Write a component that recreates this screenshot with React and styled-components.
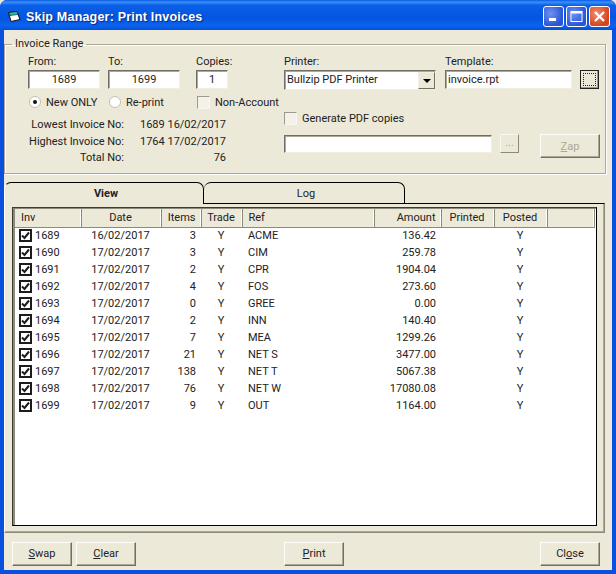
import React from "react";
import styled, {createGlobalStyle} from "styled-components";

const Global = createGlobalStyle`
    html, body {
        margin: 0;
        padding: 0;
        background: #ece9d8;
    }
    * {
        box-sizing: border-box;
    }
`;

const Win = styled.div`
    width: 616px;
    height: 574px;
    display: flex;
    flex-direction: column;
    overflow: hidden;
    border-radius: 7px 7px 0 0;
    background: #0a4fe0;
    font-family: Roboto, "Liberation Sans", Arial, sans-serif;
    font-size: 11px;
    color: #222;
`;

const TitleBar = styled.div`
    height: 30px;
    flex: none;
    display: flex;
    align-items: center;
    gap: 5px;
    padding: 3px 6px 0 8px;
    background: linear-gradient(180deg, #0a5be4 0%, #3b8ffa 7%, #0a5fe8 18%, #0455e0 60%, #0a63ee 85%, #0350d8 100%);
`;

const TitleText = styled.div`
    flex: 1;
    color: #fff;
    font-family: "Liberation Sans", Arial, sans-serif;
    font-weight: bold;
    font-size: 12.5px;
    letter-spacing: 0.2px;
    text-shadow: 1px 1px 1px #0a2a80;
`;

const CaptionGroup = styled.div`
    display: flex;
    gap: 2px;
`;

const CaptionBtn = styled.div`
    width: 21px;
    height: 21px;
    border: 1px solid #fff;
    border-radius: 3px;
    display: flex;
    align-items: center;
    justify-content: center;
    background: ${props => props.$close
        ? "radial-gradient(circle at 35% 35%, #f09070, #d8431c 70%)"
        : "radial-gradient(circle at 35% 35%, #6d93f2, #2b55d8 70%)"};
`;

const Body = styled.div`
    flex: 1;
    margin: 0 4px 4px 4px;
    background: #ece9d8;
    display: flex;
    flex-direction: column;
    min-height: 0;
`;

const Group = styled.fieldset`
    margin: 7px 0 0 0;
    padding: 0 0 0 23px;
    height: 137px;
    border: 1px solid #aca899;
    box-shadow: inset 1px 1px 0 #fff, 1px 1px 0 #fff;
    display: flex;
    gap: 6px;
    width: 602px;
`;

const Legend = styled.legend`
    margin-left: -16px;
    padding: 0 3px;
    line-height: 14px;
`;

const LeftCol = styled.div`
    width: 250px;
    flex: none;
    display: flex;
    flex-direction: column;
`;

const RightCol = styled.div`
    flex: 1;
    display: flex;
    flex-direction: column;
`;

const FieldRow = styled.div`
    display: flex;
    gap: 8px;
    margin-top: 4px;
`;

const Field = styled.div`
    width: ${props => props.$w}px;
    margin-right: ${props => props.$mr || 0}px;
    display: flex;
    flex-direction: column;
`;

const Label = styled.div`
    height: 14px;
    line-height: 14px;
    white-space: nowrap;
    margin-bottom: 1px;
`;

const Input = styled.div`
    height: 19px;
    width: ${props => props.$w ? props.$w + "px" : "100%"};
    background: #fff;
    border: 1px solid;
    border-color: #716f64 #f1efe2 #f1efe2 #716f64;
    box-shadow: inset 1px 1px 0 #aca899;
    padding: 0 2px;
    line-height: 17px;
    text-align: ${props => props.$center ? "center" : "left"};
    white-space: nowrap;
    overflow: hidden;
`;

const Combo = styled(Input)`
    position: relative;
    height: 20px;
`;

const ComboArrow = styled.div`
    position: absolute;
    right: 0;
    top: 1px;
    width: 17px;
    height: 17px;
    background: #ece9d8;
    border: 1px solid;
    border-color: #f1efe2 #716f64 #716f64 #f1efe2;
    display: flex;
    align-items: center;
    justify-content: center;
    &::after {
        content: "";
        border-left: 4px solid transparent;
        border-right: 4px solid transparent;
        border-top: 4px solid #000;
    }
`;

const OptionRow = styled.div`
    display: flex;
    align-items: center;
    height: 16px;
    margin-top: 5px;
    margin-left: 1px;
`;

const Option = styled.div`
    display: flex;
    align-items: center;
    gap: 5px;
    width: ${props => props.$w}px;
    white-space: nowrap;
`;

const Radio = styled.div`
    width: 12px;
    height: 12px;
    border-radius: 50%;
    background: #fff;
    border: 1px solid #c4c1b0;
    display: flex;
    align-items: center;
    justify-content: center;
    &::after {
        content: "";
        width: 4px;
        height: 4px;
        border-radius: 50%;
        background: ${props => props.$on ? "#111" : "transparent"};
    }
`;

const Check = styled.div`
    width: 13px;
    height: 13px;
    flex: none;
    background: #f4f2e8;
    border: 1px solid;
    border-color: #9c9a8c #f8f7f0 #f8f7f0 #9c9a8c;
`;

const InfoGrid = styled.div`
    display: grid;
    grid-template-columns: 96px 93px;
    column-gap: 9px;
    margin-top: 7px;
    text-align: right;
    line-height: 16.5px;
    white-space: nowrap;
`;

const DotsBtn = styled.div`
    width: 19px;
    height: 19px;
    margin-top: 15px;
    background: #ece9d8;
    border: 1px solid #222;
    box-shadow: inset -1px -1px 0 #999;
    display: flex;
    align-items: center;
    justify-content: center;
    &::after {
        content: "";
        width: 11px;
        height: 11px;
        border: 1px dotted #222;
    }
`;

const PdfCheck = styled.div`
    display: flex;
    align-items: center;
    gap: 5px;
    margin-top: 20px;
    height: 16px;
`;

const PathRow = styled.div`
    display: flex;
    align-items: flex-start;
    margin-top: 9px;
`;

const PathInput = styled(Input)`
    height: 18px;
`;

const SmallBtn = styled.div`
    width: 19px;
    height: 19px;
    margin: -1px 0 0 8px;
    text-align: center;
    line-height: 15px;
    color: #aca899;
    background: #ece9d8;
    border: 1px solid;
    border-color: #f8f7f0 #8c8a7c #8c8a7c #f8f7f0;
`;

const Btn = styled.div`
    width: 60px;
    height: 24px;
    flex: none;
    display: flex;
    align-items: center;
    justify-content: center;
    background: #ece9d8;
    border: 1px solid;
    border-color: #fdfdf8 #716f64 #716f64 #fdfdf8;
    box-shadow: inset -1px -1px 0 #aca899;
    color: ${props => props.$off ? "#aca899" : "#222"};
    margin-left: ${props => props.$ml || 0}px;
    margin-top: ${props => props.$mt || 0}px;
    u {
        text-underline-offset: 1px;
    }
`;

const Tabs = styled.div`
    display: flex;
    margin-top: 6px;
    height: 23px;
    flex: none;
    align-items: flex-end;
`;

const Tab = styled.div`
    width: ${props => props.$w}px;
    height: ${props => props.$active ? 22 : 21}px;
    display: flex;
    align-items: center;
    justify-content: center;
    padding-left: 4px;
    border-top: 1px solid #000;
    border-right: 1px solid #000;
    border-left: ${props => props.$active ? "1px solid #fff" : "none"};
    border-radius: 7px 7px 0 0;
    font-weight: ${props => props.$active ? "bold" : "normal"};
    position: relative;
    z-index: ${props => props.$active ? 1 : 0};
    margin-bottom: ${props => props.$active ? "-1px" : 0};
    background: #ece9d8;
`;

const TabPanel = styled.div`
    height: 330px;
    width: 601px;
    flex: none;
    padding: 3px 7px 6px 7px;
    border: 1px solid #8c8a7c;
    border-top: 1px solid #000;
    border-left-color: #fff;
    box-shadow: inset -1px -1px 0 #aca899;
`;

const ListBox = styled.div`
    height: 100%;
    background: #fff;
    border: 1px solid #000;
    border-top-color: #3c3c34;
    border-left-color: #3c3c34;
    box-shadow: inset 2px 1px 0 #8c8a7c;
    padding: 1px 0 0 2px;
    overflow: hidden;
`;

const Table = styled.table`
    border-collapse: collapse;
    table-layout: fixed;
    width: 579px;
`;

const Th = styled.th`
    height: 18px;
    padding: 0 5px 0 ${props => props.$pl || 4}px;
    font-weight: normal;
    background: #ece9d8;
    text-align: ${props => props.$align || "left"};
    border-right: 1px solid #8c8a7c;
    border-bottom: 1px solid #8c8a7c;
    box-shadow: inset -1px 0 0 #fff;
    white-space: nowrap;
`;

const Td = styled.td`
    height: 17px;
    padding: 0 5px 0 ${props => props.$pl || 4}px;
    text-align: ${props => props.$align || "left"};
    white-space: nowrap;
`;

const InvCell = styled.div`
    display: flex;
    align-items: center;
    gap: 3px;
`;

const RowCheck = styled.div`
    width: 13px;
    height: 13px;
    border: 2px solid #1c1c1c;
    background: #fff;
    display: flex;
    align-items: center;
    justify-content: center;
`;

const Footer = styled.div`
    flex: 1;
    display: flex;
    align-items: center;
    padding: 4px 0 0 8px;
`;

const columns = [
    {title: "Inv", width: 66, pl: 6},
    {title: "Date", width: 80, align: "center"},
    {title: "Items", width: 40, align: "right"},
    {title: "Trade", width: 41, align: "center"},
    {title: "Ref", width: 132, pl: 6},
    {title: "Amount", width: 67, align: "right"},
    {title: "Printed", width: 53, align: "center"},
    {title: "Posted", width: 53, align: "center"},
    {title: "", width: 47}
];

const invoices = [
    ["1689", "16/02/2017", "3", "ACME", "136.42"],
    ["1690", "17/02/2017", "3", "CIM", "259.78"],
    ["1691", "17/02/2017", "2", "CPR", "1904.04"],
    ["1692", "17/02/2017", "4", "FOS", "273.60"],
    ["1693", "17/02/2017", "0", "GREE", "0.00"],
    ["1694", "17/02/2017", "2", "INN", "140.40"],
    ["1695", "17/02/2017", "7", "MEA", "1299.26"],
    ["1696", "17/02/2017", "21", "NET S", "3477.00"],
    ["1697", "17/02/2017", "138", "NET T", "5067.38"],
    ["1698", "17/02/2017", "76", "NET W", "17080.08"],
    ["1699", "17/02/2017", "9", "OUT", "1164.00"]
];

const TickIcon = () => (
    <svg width="9" height="9" viewBox="0 0 9 9">
        <path d="M1 4.5 L3.5 7 L8 1.5" fill="none" stroke="#1c1c1c" strokeWidth="2"/>
    </svg>
);

const AppIcon = () => (
    <svg width="13" height="12" viewBox="0 0 13 12">
        <path d="M0.5 1.5 L9 0.5 L12 8.5 L3 10.5 Z" fill="#fff" stroke="#111"/>
        <path d="M1 1.5 L9 0.5 L10 3.5 L2 4.5 Z" fill="#27c0b0" stroke="#111" strokeWidth="0.6"/>
    </svg>
);

export default function App() {
    return (
        <Win>
            <Global/>
            <TitleBar>
                <AppIcon/>
                <TitleText>Skip Manager: Print Invoices</TitleText>
                <CaptionGroup>
                    <CaptionBtn>
                        <svg width="13" height="13" viewBox="0 0 13 13">
                            <rect x="2" y="8" width="7" height="3" fill="#fff"/>
                        </svg>
                    </CaptionBtn>
                    <CaptionBtn>
                        <svg width="13" height="13" viewBox="0 0 13 13">
                            <rect x="1" y="1.5" width="11" height="10" fill="none" stroke="#fff"/>
                            <rect x="1" y="1" width="11" height="2.5" fill="#fff"/>
                        </svg>
                    </CaptionBtn>
                    <CaptionBtn $close>
                        <svg width="13" height="13" viewBox="0 0 13 13">
                            <path d="M2 2 L11 11 M11 2 L2 11" stroke="#fff" strokeWidth="2.2"/>
                        </svg>
                    </CaptionBtn>
                </CaptionGroup>
            </TitleBar>
            <Body>
                <Group>
                    <Legend>Invoice Range</Legend>
                    <LeftCol>
                        <FieldRow>
                            <Field $w={72}><Label>From:</Label><Input $center>1689</Input></Field>
                            <Field $w={72} $mr={8}><Label>To:</Label><Input $center>1699</Input></Field>
                            <Field $w={32}><Label>Copies:</Label><Input $center>1</Input></Field>
                        </FieldRow>
                        <OptionRow>
                            <Option $w={80}><Radio $on/>New ONLY</Option>
                            <Option $w={88}><Radio/>Re-print</Option>
                            <Option $w={80}><Check/>Non-Account</Option>
                        </OptionRow>
                        <InfoGrid>
                            <span>Lowest Invoice No:</span><span>1689 16/02/2017</span>
                            <span>Highest Invoice No:</span><span>1764 17/02/2017</span>
                            <span>Total No:</span><span>76</span>
                        </InfoGrid>
                    </LeftCol>
                    <RightCol>
                        <FieldRow>
                            <Field $w={152} $mr={1}>
                                <Label>Printer:</Label>
                                <Combo>Bullzip PDF Printer<ComboArrow/></Combo>
                            </Field>
                            <Field $w={127}><Label>Template:</Label><Input>invoice.rpt</Input></Field>
                            <DotsBtn/>
                        </FieldRow>
                        <PdfCheck><Check/>Generate PDF copies</PdfCheck>
                        <PathRow>
                            <PathInput $w={208}/>
                            <SmallBtn>...</SmallBtn>
                            <Btn $off $ml={21} $mt={-1}><u>Z</u>ap</Btn>
                        </PathRow>
                    </RightCol>
                </Group>
                <Tabs>
                    <Tab $w={200} $active>View</Tab>
                    <Tab $w={201}>Log</Tab>
                </Tabs>
                <TabPanel>
                    <ListBox>
                        <Table>
                            <colgroup>
                                {columns.map((col, i) => <col key={i} width={col.width}/>)}
                            </colgroup>
                            <thead>
                                <tr>
                                    {columns.map((col, i) => <Th key={i} $align={col.align} $pl={col.pl}>{col.title}</Th>)}
                                </tr>
                            </thead>
                            <tbody>
                                {invoices.map(row => (
                                    <tr key={row[0]}>
                                        <Td><InvCell><RowCheck><TickIcon/></RowCheck>{row[0]}</InvCell></Td>
                                        <Td $align="center">{row[1]}</Td>
                                        <Td $align="right">{row[2]}</Td>
                                        <Td $align="center">Y</Td>
                                        <Td $pl={6}>{row[3]}</Td>
                                        <Td $align="right">{row[4]}</Td>
                                        <Td/>
                                        <Td $align="center">Y</Td>
                                        <Td/>
                                    </tr>
                                ))}
                            </tbody>
                        </Table>
                    </ListBox>
                </TabPanel>
                <Footer>
                    <Btn><u>S</u>wap</Btn>
                    <Btn $ml={4}><u>C</u>lear</Btn>
                    <Btn $ml={148}><u>P</u>rint</Btn>
                    <Btn $ml={196}>Cl<u>o</u>se</Btn>
                </Footer>
            </Body>
        </Win>
    );
}
